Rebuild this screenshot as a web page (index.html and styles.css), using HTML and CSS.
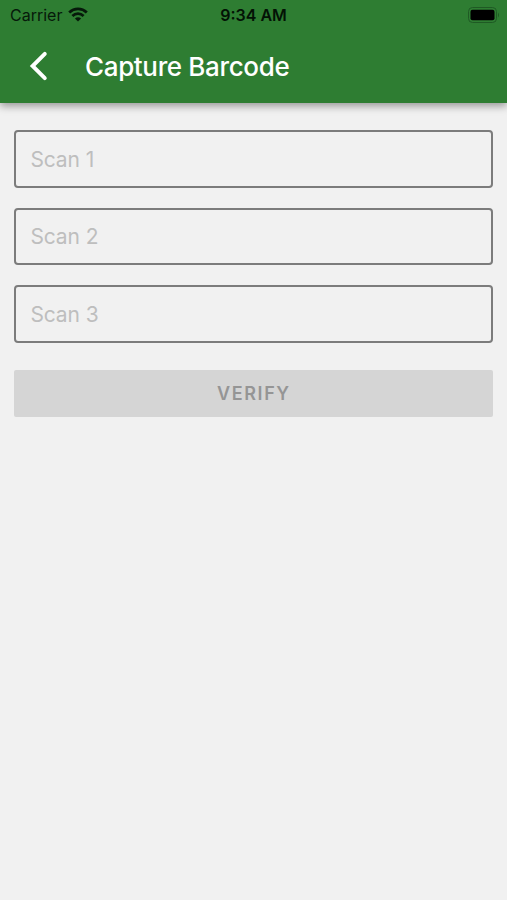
FILE: index.html
```html
<!DOCTYPE html>
<html lang="en">
<head>
<meta charset="utf-8">
<title>Capture Barcode</title>
<link rel="stylesheet" href="styles.css">
</head>
<body>
<header class="top">
  <div class="status">
    <div class="carrier"><span class="carrier-name">Carrier</span>
      <svg class="wifi" width="20" height="15" viewBox="0 0 20 15" fill="none" stroke="#06190a" stroke-width="2.8"><path d="M1.200 5.400C6.200.7 13.800.7 18.800 5.400M4.400 8.900C7.600 5.900 12.400 5.900 15.600 8.900"/><path d="M10 14.600 6.900 11.500Q10 8.800 13.100 11.500Z" fill="#06190a" stroke="none"/></svg>
    </div>
    <time class="clock">9:34 AM</time>
    <svg class="battery" width="32" height="16" viewBox="0 0 32 16"><rect x=".5" y=".5" width="28" height="15" rx="4" fill="none" stroke="#1f5a24"/><rect x="2.500" y="2.800" width="24" height="10.400" rx="2" fill="#000"/><path d="M30 5.500q2 2.500 0 5z" fill="#1f5a24"/></svg>
  </div>
  <div class="bar">
    <svg class="back" width="20" height="30" viewBox="0 0 20 30" fill="none" stroke="#fff" stroke-width="3.900" stroke-linecap="round"><path d="M15.800 2.900 3.600 15 15.800 27.100"/></svg>
    <h1 class="title">Capture Barcode</h1>
  </div>
</header>
<main class="form">
  <input class="field" placeholder="Scan 1">
  <input class="field" placeholder="Scan 2">
  <input class="field" placeholder="Scan 3">
  <button class="verify" disabled>VERIFY</button>
</main>
</body>
</html>
```
FILE: styles.css
```css
* { box-sizing: border-box; }
body { margin: 0; min-height: 900px; background: #f1f1f1; font-family: Inter, "Liberation Sans", sans-serif; }
.top { height: 103px; background: #2e7d32; box-shadow: 0 3px 8px rgba(0,0,0,.38); }
.status { display: grid; grid-template-columns: 1fr auto 1fr; align-items: center; height: 29px; padding: 0 7px 0 10px; color: #06190a; }
.carrier { display: flex; align-items: center; gap: 6px; }
.carrier-name { font-size: 16px; }
.wifi { margin-top: -1px; }
.clock { margin-left: -3px; color: #031205; font-size: 16px; font-weight: 600; }
.battery { justify-self: end; }
.bar { display: flex; align-items: center; height: 73px; padding-left: 29px; }
.title { margin: 1px 0 0 36px; color: #fff; font-size: 26px; font-weight: 500; letter-spacing: -.35px; }
.form { display: flex; flex-direction: column; gap: 20px; padding: 27px 13.600px 0 14.400px; }
.field { width: 100%; height: 57.500px; padding: 1px 14px 0; border: 2px solid #7c7c7c; border-radius: 4px; background: #f1f1f1; font: 21px Inter, sans-serif; letter-spacing: -.1px; outline: 0; }
.field::placeholder { color: #bebebe; }
.verify { height: 47px; margin-top: 7px; padding: 0; border: 0; border-radius: 2px; background: #d5d5d5; color: #959595; font: 600 18px Inter, sans-serif; letter-spacing: 1.600px; }
```
